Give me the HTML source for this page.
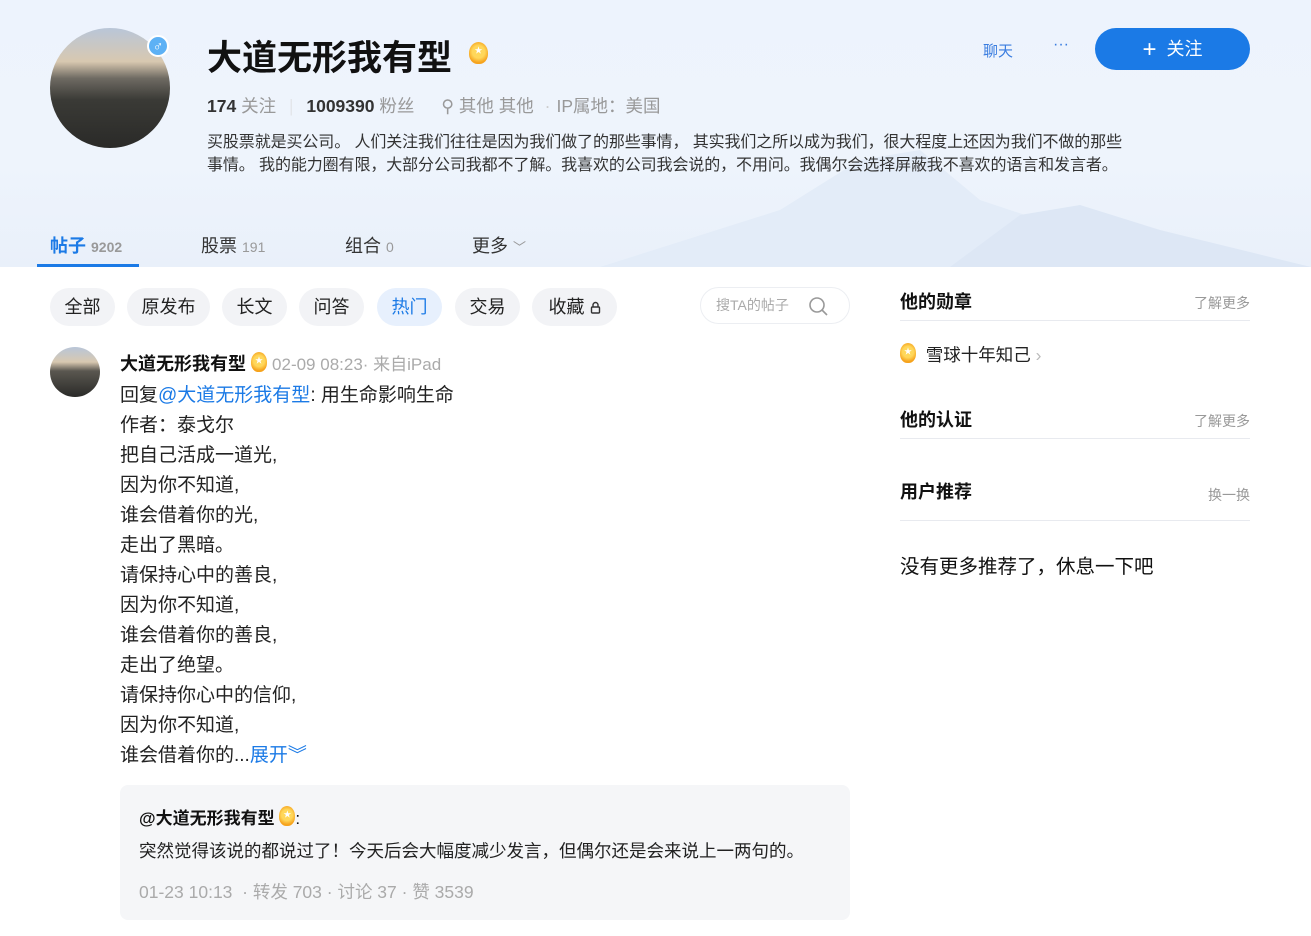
<!DOCTYPE html>
<html><head><meta charset="utf-8"><style>
*{margin:0;padding:0;box-sizing:border-box}
body{width:1311px;height:936px;overflow:hidden;background:#fff;font-family:"Liberation Sans","Noto Sans CJK SC",sans-serif;color:#222;position:relative}
.hdr{position:absolute;left:0;top:0;width:1311px;height:267px;background:linear-gradient(180deg,#edf3fd 0%,#eef4fc 60%,#e9f0fa 100%);overflow:hidden}
.abs{position:absolute;white-space:nowrap}
.av{position:absolute;left:50px;top:28px;width:120px;height:120px;border-radius:50%;background:linear-gradient(180deg,#b9c6d8 0%,#d8c8b0 28%,#6e6a62 42%,#3a3a36 60%,#2a2a28 100%);overflow:hidden}
.badge{display:inline-block;width:16px;height:20px;border-radius:50% 50% 45% 45%;background:radial-gradient(circle at 50% 45%,#ffd75a 0 40%,#f6a31d 70%);position:relative;vertical-align:-2px}
.badge:after{content:"★";position:absolute;left:0;right:0;top:3px;text-align:center;font-size:8px;color:#fff}
.pill{position:absolute;top:288px;height:38px;border-radius:19px;background:#f2f3f6;font-size:18px;line-height:38px;text-align:center;color:#222}
.post{position:absolute;left:120px;top:381px;font-size:19px;line-height:30px;color:#222}
.rt{position:absolute;left:900px;width:350px}
.rh{font-size:18px;font-weight:bold;color:#111}
.rm{position:absolute;right:0;font-size:14px;color:#999}
.line{position:absolute;left:900px;width:350px;height:1px;background:#e8eaef}
</style></head><body>
<div class="hdr">
 <svg class="abs" style="left:600px;top:120px" width="711" height="147"><path d="M0 147 L180 90 L260 40 L320 30 L380 80 L440 100 L520 120 L560 147Z" fill="#e3ecf8"/><path d="M350 147 L420 95 L480 85 L560 110 L711 147Z" fill="#dde7f5"/></svg>
</div>
<div class="av"></div>
<div class="abs" style="left:147px;top:35px;width:22px;height:22px;border-radius:50%;background:#5db1f5;border:2px solid #fff;color:#fff;font-size:14px;line-height:18px;text-align:center">♂</div>
<div class="abs" style="left:207px;top:30px;font-size:35px;font-weight:bold;color:#111">大道无形我有型</div>
<div class="abs" style="left:469px;top:42px"><span class="badge" style="width:19px;height:22px"></span></div>
<div class="abs" style="left:207px;top:93px;font-size:17.5px;color:#999"><b style="color:#333">174</b> 关注 <span style="color:#e3e6ea;margin:0 8px">|</span> <b style="color:#333">1009390</b> 粉丝 <span style="margin-left:22px">⚲ 其他 其他</span> <span style="margin:0 6px;color:#ccc">·</span>IP属地：美国</div>
<div class="abs" style="left:207px;top:131px;font-size:16px;line-height:23px;color:#333;letter-spacing:-0.1px">买股票就是买公司。 人们关注我们往往是因为我们做了的那些事情， 其实我们之所以成为我们，很大程度上还因为我们不做的那些<br>事情。 我的能力圈有限，大部分公司我都不了解。我喜欢的公司我会说的，不用问。我偶尔会选择屏蔽我不喜欢的语言和发言者。</div>
<div class="abs" style="left:983px;top:40px;font-size:15px;color:#3a7de0">聊天</div>
<div class="abs" style="left:1053px;top:36px;font-size:16px;color:#3a7de0">···</div>
<div class="abs" style="left:1095px;top:28px;width:155px;height:42px;border-radius:21px;background:#1b7ae6;color:#fff;font-size:18px;line-height:42px;text-align:center"><span style="font-size:24px;vertical-align:-2px">+</span>&nbsp; 关注</div>
<div class="abs" style="left:50px;top:232px;font-size:18px;font-weight:bold;color:#1b7ae6">帖子 <span style="font-size:14px;color:#999">9202</span></div>
<div class="abs" style="left:37px;top:264px;width:102px;height:3px;background:#1b7ae6"></div>
<div class="abs" style="left:201px;top:232px;font-size:18px;color:#333">股票 <span style="font-size:14px;color:#999">191</span></div>
<div class="abs" style="left:345px;top:232px;font-size:18px;color:#333">组合 <span style="font-size:14px;color:#999">0</span></div>
<div class="abs" style="left:472px;top:232px;font-size:18px;color:#333">更多 <span style="font-size:13px;color:#999">﹀</span></div>
<div class="pill" style="left:50px;width:65px">全部</div>
<div class="pill" style="left:127px;width:83px">原发布</div>
<div class="pill" style="left:222px;width:65px">长文</div>
<div class="pill" style="left:299px;width:65px">问答</div>
<div class="pill" style="left:377px;width:65px;background:#e7f0fd;color:#1b7ae6">热门</div>
<div class="pill" style="left:455px;width:65px">交易</div>
<div class="pill" style="left:532px;width:85px">收藏 <svg width="11" height="13" style="vertical-align:-1px"><path d="M3 6V4a2.5 2.5 0 0 1 5 0v2" fill="none" stroke="#333" stroke-width="1.4"/><rect x="1.5" y="6" width="8" height="6" rx="1" fill="none" stroke="#333" stroke-width="1.4"/></svg></div>
<div class="abs" style="left:700px;top:287px;width:150px;height:37px;border:1px solid #eceef2;border-radius:19px;font-size:14px;line-height:35px;color:#aaa;padding-left:15px">搜TA的帖子<svg style="position:absolute;right:20px;top:9px" width="20" height="20"><circle cx="8" cy="8" r="7" fill="none" stroke="#999" stroke-width="1.6"/><path d="M13 13 L18 18" stroke="#999" stroke-width="1.6"/></svg></div>
<div class="abs" style="left:50px;top:347px;width:50px;height:50px;border-radius:50%;background:linear-gradient(180deg,#b9c6d8 0%,#d8c8b0 30%,#5a5750 48%,#2a2a28 100%)"></div>
<div class="abs" style="left:120px;top:350px;font-size:18px;font-weight:bold;color:#111">大道无形我有型 <span class="badge"></span> <span style="font-weight:normal;font-size:17px;color:#aaa">02-09 08:23· 来自iPad</span></div>
<div class="post">回复<span style="color:#1b7ae6">@大道无形我有型</span>: 用生命影响生命<br>作者：泰戈尔<br>把自己活成一道光,<br>因为你不知道,<br>谁会借着你的光,<br>走出了黑暗。<br>请保持心中的善良,<br>因为你不知道,<br>谁会借着你的善良,<br>走出了绝望。<br>请保持你心中的信仰,<br>因为你不知道,<br>谁会借着你的...<span style="color:#1b7ae6">展开︾</span></div>
<div class="abs" style="left:120px;top:785px;width:730px;height:135px;background:#f5f6f8;border-radius:8px"></div>
<div class="abs" style="left:139px;top:804px;font-size:17px;font-weight:bold;color:#111">@大道无形我有型 <span class="badge"></span><span style="font-weight:normal">:</span></div>
<div class="abs" style="left:139px;top:838px;font-size:17.5px;color:#222">突然觉得该说的都说过了！今天后会大幅度减少发言，但偶尔还是会来说上一两句的。</div>
<div class="abs" style="left:139px;top:879px;font-size:17.5px;color:#aaa">01-23 10:13 &nbsp;· 转发 703 · 讨论 37 · 赞 3539</div>
<div class="rt" style="top:288px"><span class="rh">他的勋章</span><span class="rm" style="top:5px">了解更多</span></div>
<div class="line" style="top:320px"></div>
<div class="rt" style="top:342px;font-size:17.5px"><span class="badge"></span>&nbsp; 雪球十年知己 <span style="color:#bbb">›</span></div>
<div class="rt" style="top:406px"><span class="rh">他的认证</span><span class="rm" style="top:5px">了解更多</span></div>
<div class="line" style="top:438px"></div>
<div class="rt" style="top:478px"><span class="rh">用户推荐</span><span class="rm" style="top:7px">换一换</span></div>
<div class="line" style="top:520px"></div>
<div class="rt" style="top:550px;font-size:19.5px;color:#111">没有更多推荐了，休息一下吧</div>
</body></html>
